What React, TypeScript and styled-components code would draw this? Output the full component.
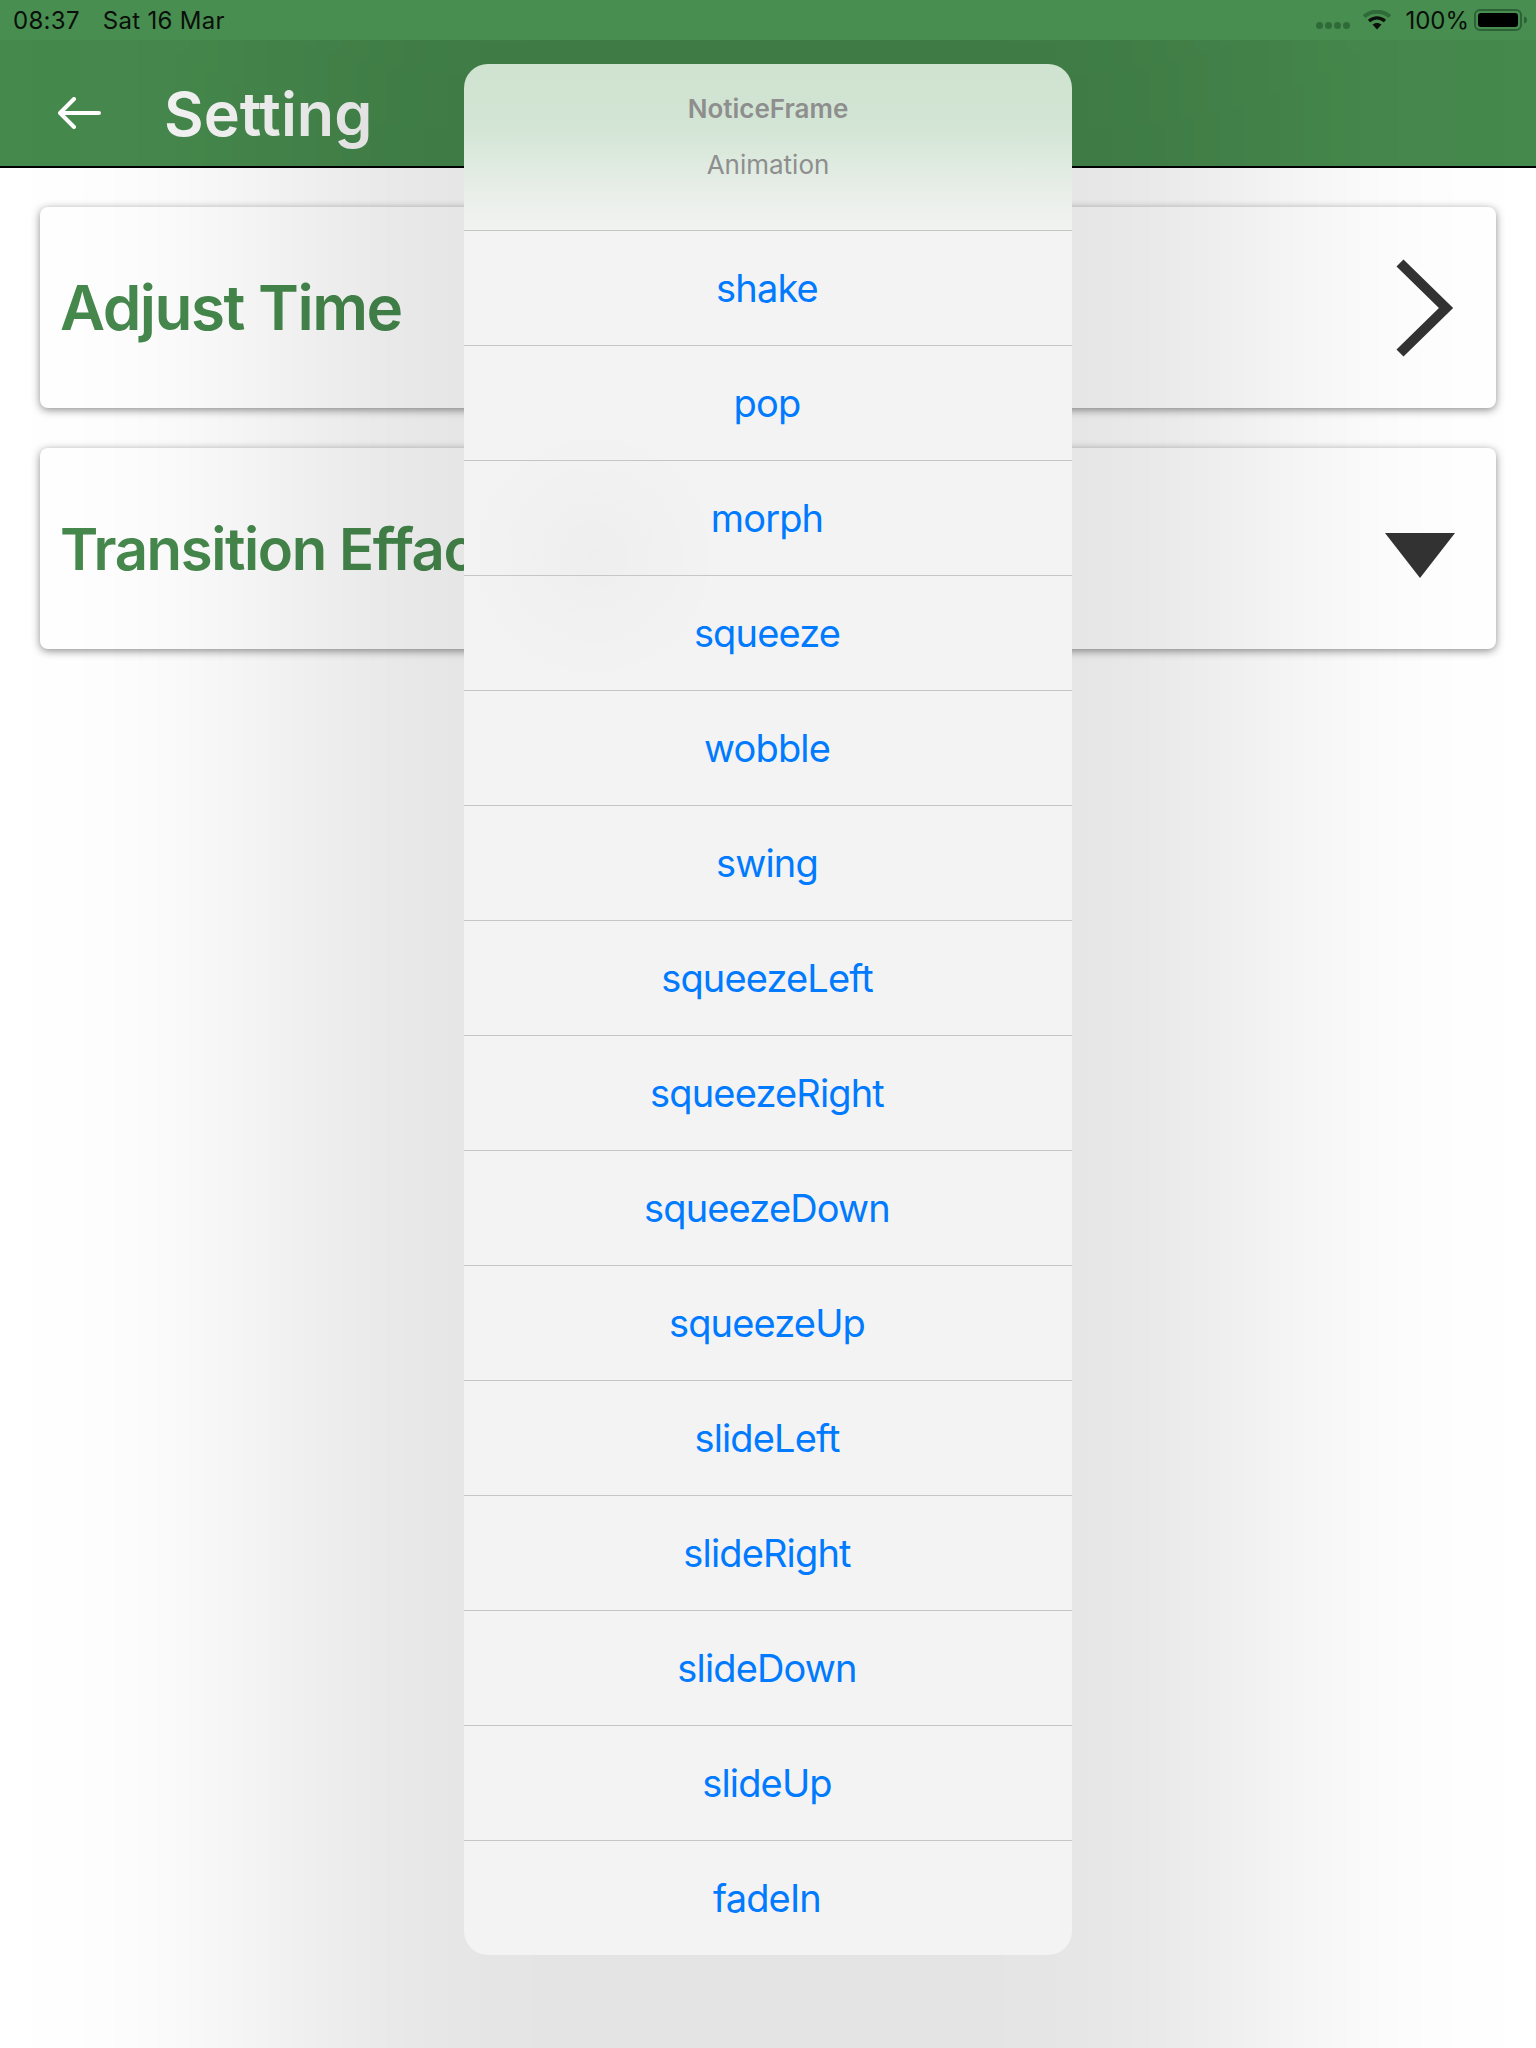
import React from 'react';
import styled, { createGlobalStyle } from 'styled-components';

const GlobalStyle = createGlobalStyle`
  html, body {
    margin: 0;
    padding: 0;
    background: #fff;
  }
`;

const ANIMATIONS = [
  'shake',
  'pop',
  'morph',
  'squeeze',
  'wobble',
  'swing',
  'squeezeLeft',
  'squeezeRight',
  'squeezeDown',
  'squeezeUp',
  'slideLeft',
  'slideRight',
  'slideDown',
  'slideUp',
  'fadeIn',
];

const App: React.FC = () => {
  return (
    <Page>
      <GlobalStyle />
      <StatusBar>
        <StatusGroup>
          <span>08:37</span>
          <span>Sat 16 Mar</span>
        </StatusGroup>
        <StatusIcons>
          <SignalDots>
            <i />
            <i />
            <i />
            <i />
          </SignalDots>
          <svg width="28" height="20" viewBox="0 0 28 20">
            <path d="M1 6.5C8.5 0 19.5 0 27 6.5" fill="none" stroke="#2f6a39" strokeWidth="4" />
            <path d="M6 11C11 6.8 17 6.8 22 11" fill="none" stroke="#0a0f0a" strokeWidth="3.4" />
            <path d="M14 19.5L9.5 14.6C12 12.5 16 12.5 18.5 14.6Z" fill="#0a0f0a" />
          </svg>
          <Percent>100%</Percent>
          <svg width="56" height="24" viewBox="0 0 56 24">
            <rect x="1" y="2" width="46" height="20" rx="5" fill="none" stroke="#2c6236" strokeWidth="2" />
            <rect x="4" y="5" width="40" height="14" rx="3" fill="#000" />
            <path d="M50 8.5C52 9 53 10.4 53 12C53 13.6 52 15 50 15.5Z" fill="#2c6236" />
          </svg>
        </StatusIcons>
      </StatusBar>

      <Header>
        <svg width="44" height="32" viewBox="0 0 44 32">
          <path
            d="M16 2L2 16L16 30M2 16H41"
            fill="none"
            stroke="#fff"
            strokeWidth="4"
            strokeLinecap="round"
            strokeLinejoin="round"
          />
        </svg>
        <Title>Setting</Title>
      </Header>

      <Content>
        <Card>
          <CardTitle $size={62} $spacing={-1.5}>Adjust Time</CardTitle>
          <svg width="60" height="100" viewBox="0 0 60 100">
            <path d="M5 5L51 50L5 95" fill="none" stroke="#333" strokeWidth="10" />
          </svg>
        </Card>
        <Card>
          <CardTitle $size={58} $spacing={-1.4}>Transition Effact</CardTitle>
          <DownTriangle width="70" height="45" viewBox="0 0 70 45">
            <path d="M0 0H70L35 45Z" fill="#333" />
          </DownTriangle>
        </Card>
      </Content>

      <Sheet>
        <SheetHeader>
          <SheetTitle>NoticeFrame</SheetTitle>
          <SheetSubtitle>Animation</SheetSubtitle>
        </SheetHeader>
        <SheetList>
          {ANIMATIONS.map((name) => (
            <SheetRow key={name}>{name}</SheetRow>
          ))}
        </SheetList>
      </Sheet>
    </Page>
  );
};

const Page = styled.div`
  position: relative;
  width: 1536px;
  height: 2048px;
  overflow: hidden;
  background: #fff;
  font-family: Inter, 'Liberation Sans', sans-serif;
`;

const StatusBar = styled.div`
  position: relative;
  z-index: 3;
  box-sizing: border-box;
  height: 40px;
  padding: 0 6px 0 13px;
  display: flex;
  align-items: center;
  justify-content: space-between;
  background: #488e50;
  color: #0a0f0a;
  font-size: 24px;
`;

const StatusGroup = styled.div`
  display: flex;
  gap: 23px;
  letter-spacing: 0.3px;
`;

const StatusIcons = styled.div`
  display: flex;
  align-items: center;
`;

const SignalDots = styled.div`
  display: flex;
  gap: 2px;
  margin: 10px 13px 0 0;

  i {
    width: 7px;
    height: 7px;
    border-radius: 50%;
    background: #2f6a39;
  }
`;

const Percent = styled.span`
  margin: 0 5px 0 14px;
`;

const Header = styled.div`
  box-sizing: border-box;
  height: 128px;
  padding: 20px 0 0 58px;
  display: flex;
  align-items: center;
  gap: 62px;
  background: #46894d;
  border-bottom: 2px solid #000;
`;

const Title = styled.h1`
  margin: 0;
  padding-top: 2px;
  color: #f6f6f6;
  font-size: 61px;
  font-weight: 600;
`;

const Content = styled.div`
  padding: 39px 40px 0;
  display: flex;
  flex-direction: column;
  gap: 40px;
`;

const Card = styled.div`
  box-sizing: border-box;
  height: 201px;
  padding: 0 41px 0 20px;
  display: flex;
  align-items: center;
  justify-content: space-between;
  background: #fff;
  border-radius: 8px;
  box-shadow: 0 2px 8px rgba(0, 0, 0, 0.45);
`;

const CardTitle = styled.div<{ $size: number; $spacing: number }>`
  color: #46894d;
  font-size: ${(p) => p.$size}px;
  font-weight: 600;
  letter-spacing: ${(p) => p.$spacing}px;
`;

const DownTriangle = styled.svg`
  margin-top: 14px;
`;

const Sheet = styled.div`
  position: absolute;
  z-index: 2;
  top: 64px;
  left: 464px;
  width: 608px;
  border-radius: 24px;

  /* dim behind the sheet, runs past the bottom of the page so it never fades there */
  &::before {
    content: '';
    position: absolute;
    inset: -184px -184px -600px -184px;
    z-index: -1;
    background: rgba(0, 0, 0, 0.105);
    filter: blur(130px);
  }
`;

const SheetHeader = styled.div`
  box-sizing: border-box;
  height: 166px;
  padding-top: 29px;
  display: flex;
  flex-direction: column;
  align-items: center;
  gap: 25px;
  border-radius: 24px 24px 0 0;
  background: linear-gradient(#cfe3d0 0, #d3e5d5 40%, #e0ebe1 62%, #ebefeb 82%, #f1f3f1 100%);
  color: #8e8e8e;
  font-size: 26px;
`;

const SheetTitle = styled.div`
  font-weight: 600;
`;

const SheetSubtitle = styled.div`
  font-weight: 400;
`;

const SheetList = styled.div`
  border-radius: 0 0 24px 24px;
  overflow: hidden;
  background:
    radial-gradient(circle 130px at 130px 325px, rgba(0, 0, 0, 0.02), rgba(0, 0, 0, 0)),
    #f3f3f3;
`;

const SheetRow = styled.div`
  box-sizing: border-box;
  height: 115px;
  padding-right: 2px;
  display: flex;
  align-items: center;
  justify-content: center;
  border-top: 1px solid #c6c6c6;
  color: #007aff;
  font-size: 38px;
  letter-spacing: -0.85px;
`;

export default App;
